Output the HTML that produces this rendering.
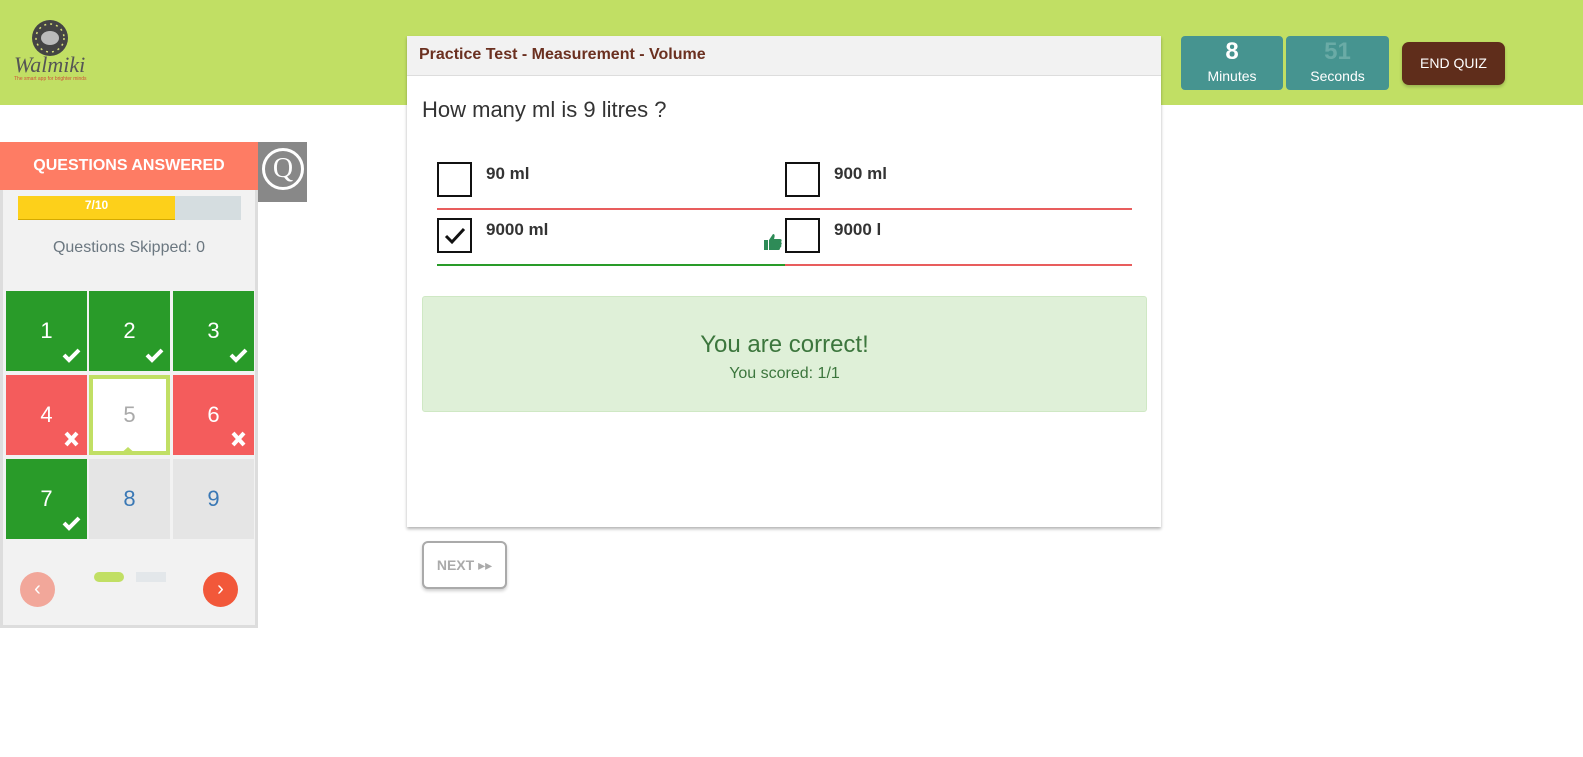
<!DOCTYPE html>
<html><head><meta charset="utf-8"><style>
*{box-sizing:border-box;margin:0;padding:0}
body{width:1583px;height:757px;position:relative;background:#fff;font-family:"Liberation Sans","DejaVu Sans",sans-serif;overflow:hidden}
.a{position:absolute}
.hdr{left:0;top:0;width:1583px;height:105px;background:#c1df64}
.cell{position:absolute;width:81px;height:80px;color:#fff;font-size:22px;display:flex;align-items:center;justify-content:center}
.g{background:#299b29}.r{background:#f45c5c}.e{background:#e5e5e5;color:#3a78b5}
.mk{position:absolute;right:6px;bottom:8px;width:20px;height:16px}
.cb{position:absolute;width:35px;height:35px;border:2px solid #111;background:#fff}
.opt{position:absolute;font-weight:bold;font-size:17px;color:#333}
</style></head><body>
<div class="a hdr"></div>
<svg class="a" style="left:30px;top:18px" width="40" height="40"><circle cx="20" cy="20" r="18" fill="#444"/><ellipse cx="20" cy="20" rx="9" ry="7" fill="#bbb"/><circle cx="20" cy="20" r="14" fill="none" stroke="#d8e07a" stroke-width="1.5" stroke-dasharray="2 4"/></svg>
<div class="a" style="left:14px;top:52px;font-family:'Liberation Serif',serif;font-style:italic;font-size:22px;color:#555">Walmiki</div>
<div class="a" style="left:14px;top:76px;font-size:5px;color:#d0533a">The smart app for brighter minds</div>

<div class="a" style="left:407px;top:36px;width:754px;height:491px;background:#fff;box-shadow:0 2px 3px rgba(0,0,0,.3)"></div>
<div class="a" style="left:407px;top:36px;width:754px;height:40px;background:#f2f2f2;border-bottom:1px solid #ddd;padding:10px 0 0 12px;font-weight:bold;font-size:16px;color:#6b3020">Practice Test - Measurement - Volume</div>
<div class="a" style="left:422px;top:97px;font-size:22px;color:#333">How many ml is 9 litres ?</div>
<div class="cb" style="left:437px;top:162px"></div><div class="opt" style="left:486px;top:164px">90 ml</div>
<div class="cb" style="left:785px;top:162px"></div><div class="opt" style="left:834px;top:164px">900 ml</div>
<div class="a" style="left:437px;top:208px;width:695px;height:2px;background:#e85d5d"></div>
<div class="cb" style="left:437px;top:218px"><svg width="31" height="31"><path d="M7 16 L13 22 L25 9" fill="none" stroke="#111" stroke-width="3"/></svg></div><div class="opt" style="left:486px;top:220px">9000 ml</div>
<svg class="a" style="left:763px;top:233px" width="19" height="18"><path d="M1 7h4v10H1zM6 7l4-6c2 0 2 2 1 5h6c2 0 2 2 1 3 1 1 1 2 0 3 1 1 0 2-1 3 0 2-1 2-2 2H6z" fill="#2e8b57"/></svg>
<div class="cb" style="left:785px;top:218px"></div><div class="opt" style="left:834px;top:220px">9000 l</div>
<div class="a" style="left:437px;top:264px;width:348px;height:2px;background:#299b29"></div>
<div class="a" style="left:785px;top:264px;width:347px;height:2px;background:#e85d5d"></div>
<div class="a" style="left:422px;top:296px;width:725px;height:116px;background:#dff0d8;border:1px solid #cfe8c4;border-radius:3px;text-align:center;color:#3c763d">
<div style="font-size:24px;margin-top:34px">You are correct!</div><div style="font-size:16px;margin-top:6px">You scored: 1/1</div></div>
<div class="a" style="left:422px;top:541px;width:85px;height:48px;border:2px solid #aaa;border-radius:6px;background:#fff;box-shadow:0 2px 3px rgba(0,0,0,.2);color:#aaa;font-weight:bold;font-size:14px;text-align:center;line-height:44px">NEXT ▸▸</div>

<div class="a" style="left:1181px;top:36px;width:102px;height:54px;background:#469490;border-radius:4px;color:#fff;text-align:center"><div style="font-size:24px;font-weight:bold;line-height:32px">8</div><div style="font-size:14px">Minutes</div></div>
<div class="a" style="left:1286px;top:36px;width:103px;height:54px;background:#469490;border-radius:4px;color:#fff;text-align:center"><div style="font-size:24px;font-weight:bold;line-height:32px;color:#6aaba6">51</div><div style="font-size:14px">Seconds</div></div>
<div class="a" style="left:1402px;top:42px;width:103px;height:43px;background:#5f2d1b;border-radius:7px;color:#fff;font-size:14px;text-align:center;line-height:43px;box-shadow:0 2px 3px rgba(0,0,0,.2)">END QUIZ</div>

<div class="a" style="left:0;top:142px;width:258px;height:486px;background:#f2f2f2;border:3px solid #ddd;border-top:0"></div>
<div class="a" style="left:0;top:142px;width:258px;height:48px;background:#fe7c64;color:#fff;font-weight:bold;font-size:16px;text-align:center;line-height:48px">QUESTIONS ANSWERED</div>
<div class="a" style="left:258px;top:142px;width:49px;height:60px;background:#888"><div style="margin:6px 0 0 4px;width:42px;height:42px;border:3px solid #fff;border-radius:50%;color:#fff;font-family:'Liberation Serif',serif;font-size:28px;text-align:center;line-height:36px">Q</div></div>
<div class="a" style="left:18px;top:196px;width:223px;height:24px;background:#d5dde0"></div>
<div class="a" style="left:18px;top:196px;width:157px;height:24px;background:#fdd01a;border-bottom:1px solid #d4a900;color:#fff;font-weight:bold;font-size:12px;text-align:center;line-height:18px">7/10</div>
<div class="a" style="left:0;top:239px;width:258px;text-align:center;font-size:16px;color:#6b7780">Questions Skipped: 0</div>
<div class="cell g" style="left:6px;top:291px">1<svg class="mk"><path d="M3 8l5 5 10-10" fill="none" stroke="#fff" stroke-width="4"/></svg></div>
<div class="cell g" style="left:89px;top:291px">2<svg class="mk"><path d="M3 8l5 5 10-10" fill="none" stroke="#fff" stroke-width="4"/></svg></div>
<div class="cell g" style="left:173px;top:291px">3<svg class="mk"><path d="M3 8l5 5 10-10" fill="none" stroke="#fff" stroke-width="4"/></svg></div>
<div class="cell r" style="left:6px;top:375px">4<svg class="mk"><path d="M5 2l11 12M16 2L5 14" fill="none" stroke="#fff" stroke-width="4"/></svg></div>
<div class="cell" style="left:89px;top:375px;background:#fff;border:4px solid #c1df64;color:#aaa">5</div>
<div class="a" style="left:119px;top:447px;width:0;height:0;border-left:9px solid transparent;border-right:9px solid transparent;border-bottom:8px solid #c1df64"></div>
<div class="cell r" style="left:173px;top:375px">6<svg class="mk"><path d="M5 2l11 12M16 2L5 14" fill="none" stroke="#fff" stroke-width="4"/></svg></div>
<div class="cell g" style="left:6px;top:459px">7<svg class="mk"><path d="M3 8l5 5 10-10" fill="none" stroke="#fff" stroke-width="4"/></svg></div>
<div class="cell e" style="left:89px;top:459px">8</div>
<div class="cell e" style="left:173px;top:459px">9</div>
<div class="a" style="left:94px;top:572px;width:30px;height:10px;border-radius:5px;background:#c1df64"></div>
<div class="a" style="left:136px;top:572px;width:30px;height:10px;background:#e3e7ea"></div>
<div class="a" style="left:20px;top:572px;width:35px;height:35px;border-radius:50%;background:#f2a79a;color:#fff;text-align:center;line-height:35px;font-size:20px">‹</div>
<div class="a" style="left:203px;top:572px;width:35px;height:35px;border-radius:50%;background:#f2583a;color:#fff;text-align:center;line-height:35px;font-size:20px">›</div>
</body></html>
